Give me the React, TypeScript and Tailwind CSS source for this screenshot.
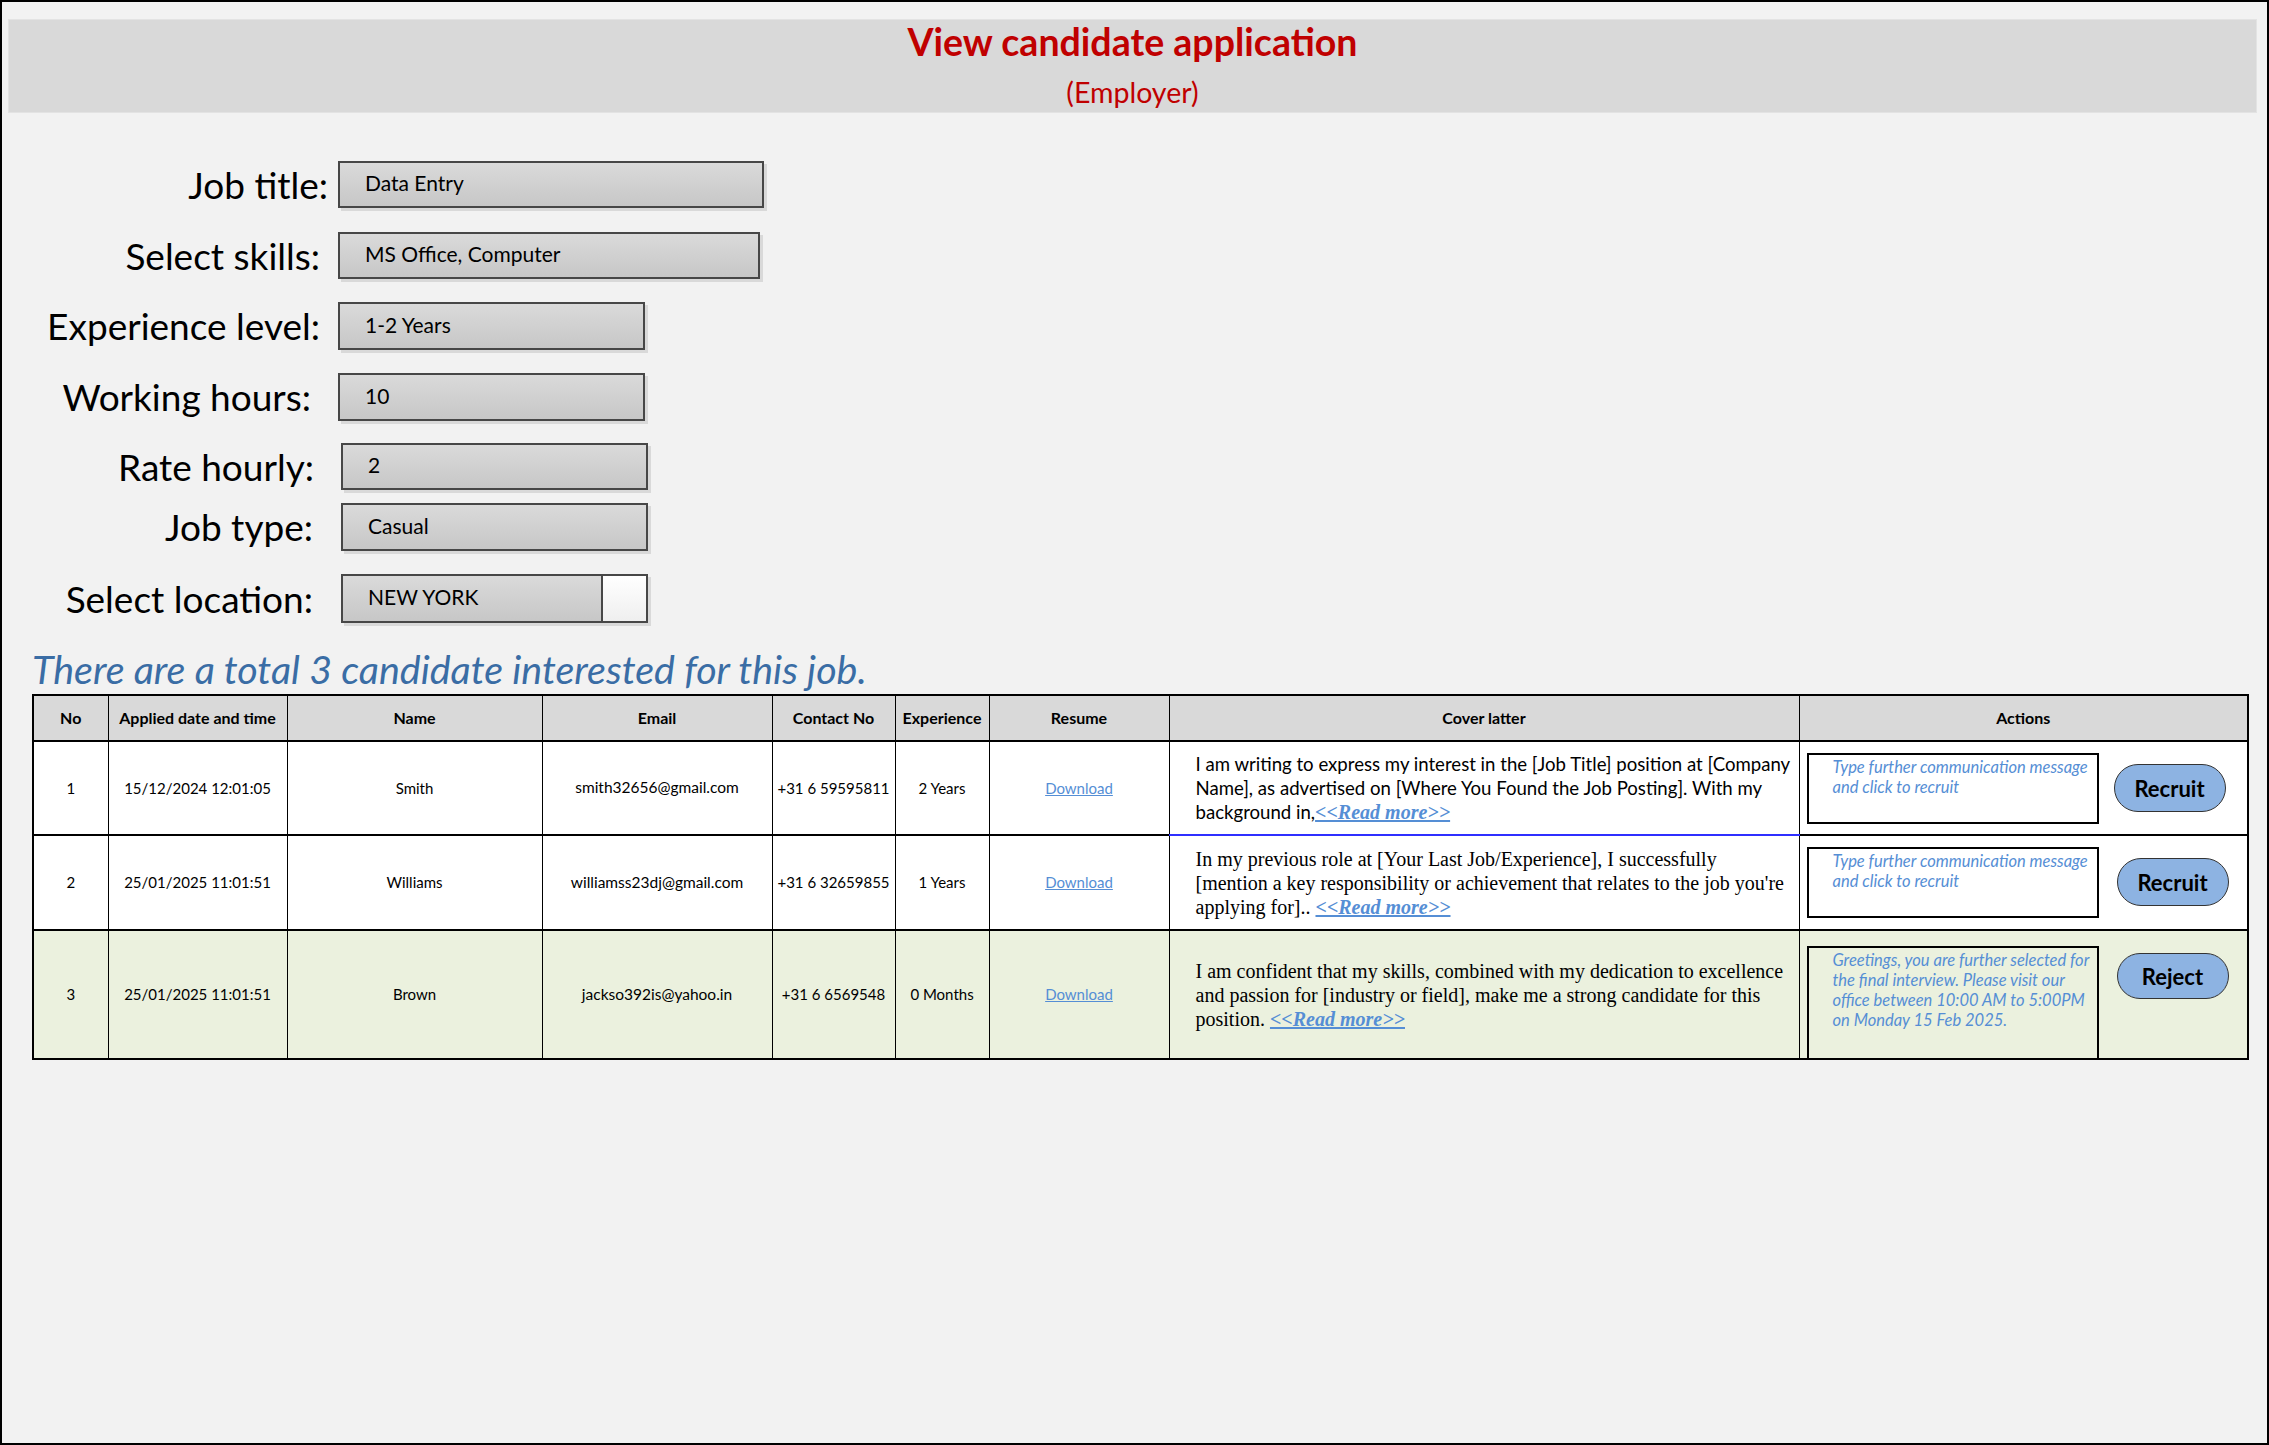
import React from 'react';

type Field = {
  label: string;
  value: string;
  labelW: string;
  gap: string;
  boxW: string;
  boxH: string;
  mt: string;
  select?: boolean;
};

const fields: Field[] = [
  { label: 'Job title:', value: 'Data Entry', labelW: 'w-[326px]', gap: 'ml-[10px]', boxW: 'w-[426px]', boxH: 'h-[47px]', mt: 'mt-[48px]' },
  { label: 'Select skills:', value: 'MS Office, Computer', labelW: 'w-[318px]', gap: 'ml-[18px]', boxW: 'w-[422px]', boxH: 'h-[47px]', mt: 'mt-[24px]' },
  { label: 'Experience level:', value: '1-2 Years', labelW: 'w-[318px]', gap: 'ml-[18px]', boxW: 'w-[307px]', boxH: 'h-[48px]', mt: 'mt-[23px]' },
  { label: 'Working hours:', value: '10', labelW: 'w-[309px]', gap: 'ml-[27px]', boxW: 'w-[307px]', boxH: 'h-[48px]', mt: 'mt-[23px]' },
  { label: 'Rate hourly:', value: '2', labelW: 'w-[312px]', gap: 'ml-[27px]', boxW: 'w-[307px]', boxH: 'h-[47px]', mt: 'mt-[22px]' },
  { label: 'Job type:', value: 'Casual', labelW: 'w-[311px]', gap: 'ml-[28px]', boxW: 'w-[307px]', boxH: 'h-[48px]', mt: 'mt-[13px]' },
  { label: 'Select location:', value: 'NEW YORK', labelW: 'w-[311px]', gap: 'ml-[28px]', boxW: 'w-[307px]', boxH: 'h-[49px]', mt: 'mt-[23px]', select: true },
];

type Row = {
  no: string;
  date: string;
  name: string;
  email: string;
  phone: string;
  exp: string;
  letter: string[];
  serif: boolean;
  message: string[];
  action: string;
};

const rows: Row[] = [
  {
    no: '1',
    date: '15/12/2024 12:01:05',
    name: 'Smith',
    email: 'smith32656@gmail.com',
    phone: '+31 6 59595811',
    exp: '2 Years',
    letter: [
      'I am writing to express my interest in the [Job Title] position at [Company',
      'Name], as advertised on [Where You Found the Job Posting]. With my',
      'background in,',
    ],
    serif: false,
    message: ['Type further communication message', 'and click to recruit'],
    action: 'Recruit',
  },
  {
    no: '2',
    date: '25/01/2025 11:01:51',
    name: 'Williams',
    email: 'williamss23dj@gmail.com',
    phone: '+31 6 32659855',
    exp: '1 Years',
    letter: [
      'In my previous role at [Your Last Job/Experience], I successfully',
      "[mention a key responsibility or achievement that relates to the job you're",
      'applying for].. ',
    ],
    serif: true,
    message: ['Type further communication message', 'and click to recruit'],
    action: 'Recruit',
  },
  {
    no: '3',
    date: '25/01/2025 11:01:51',
    name: 'Brown',
    email: 'jackso392is@yahoo.in',
    phone: '+31 6 6569548',
    exp: '0 Months',
    letter: [
      'I am confident that my skills, combined with my dedication to excellence',
      'and passion for [industry or field], make me a strong candidate for this',
      'position. ',
    ],
    serif: true,
    message: [
      'Greetings, you are further selected for',
      'the final interview. Please visit our',
      'office between 10:00 AM to 5:00PM',
      'on Monday 15 Feb 2025.',
    ],
    action: 'Reject',
  },
];

const headers = ['No', 'Applied date and time', 'Name', 'Email', 'Contact No', 'Experience', 'Resume', 'Cover latter', 'Actions'];
const widths = ['w-[75px]', 'w-[179px]', 'w-[255px]', 'w-[230px]', 'w-[123px]', 'w-[94px]', 'w-[180px]', 'w-[630px]', 'w-[449px]'];
const rowH = ['h-[94px]', 'h-[95px]', 'h-[127px]'];

function FormRow({ f }: { f: Field }) {
  return (
    <div className={`flex items-center ${f.mt}`}>
      <div className={`${f.labelW} text-right text-[37px] leading-[36px] text-black`}>{f.label}</div>
      <div
        className={`${f.gap} ${f.boxW} ${f.boxH} flex border-2 border-[#474747] bg-gradient-to-b from-[#dadada] to-[#c7c7c7] shadow-[3px_3px_0_#d9d9d9]`}
      >
        <div className="flex-1 flex items-center pl-[25px] pb-[3px] text-[21px] text-black">{f.value}</div>
        {f.select && <div className="w-[45px] border-l-2 border-[#474747] bg-gradient-to-b from-white to-[#efefef]" />}
      </div>
    </div>
  );
}

function ReadMore() {
  return (
    <span className="font-['Liberation_Serif',serif] font-bold italic underline text-[#558ed5] text-[20px]">
      {'<<Read more>>'}
    </span>
  );
}

export default function App() {
  return (
    <div className="w-[2269px] h-[1445px] bg-[#f2f2f2] border-2 border-black font-['Lato',sans-serif] overflow-hidden">
      <div className="mt-[17px] ml-[6px] mr-[10px] h-[94px] bg-[#d9d9d9] border border-[#e3e3e3] pt-[4px] text-center text-[#c00000]">
        <div className="text-[37.5px] leading-[36px] font-bold">View candidate application</div>
        <div className="mt-[19px] text-[28.5px] leading-[27px]">(Employer)</div>
      </div>

      {fields.map((f) => (
        <FormRow key={f.label} f={f} />
      ))}

      <div className="mt-[25px] ml-[30px] text-[39.4px] leading-[42px] italic text-[#3a6da5]">
        There are a total 3 candidate interested for this job.
      </div>

      <table className="mt-[4px] ml-[30px] w-[2215px] table-fixed border-collapse border-2 border-black text-[15px] text-black">
        <colgroup>
          {widths.map((w, i) => (
            <col key={i} className={w} />
          ))}
        </colgroup>
        <thead>
          <tr className="h-[46px] bg-[#d9d9d9] border-b-2 border-black">
            {headers.map((h) => (
              <th key={h} className="border-x border-black font-bold text-center text-[16px]">
                {h}
              </th>
            ))}
          </tr>
        </thead>
        <tbody>
          {rows.map((r, i) => (
            <tr key={r.no} className={`${rowH[i]} border-b-2 border-black ${i === 2 ? 'bg-[#ebf1de]' : 'bg-white'}`}>
              <td className="border-x border-black text-center">{r.no}</td>
              <td className="border-x border-black text-center">{r.date}</td>
              <td className="border-x border-black text-center">{r.name}</td>
              <td className="border-x border-black text-center text-[15.5px]">{r.email}</td>
              <td className="border-x border-black text-center">{r.phone}</td>
              <td className="border-x border-black text-center">{r.exp}</td>
              <td className="border-x border-black text-center">
                <span className="underline text-[#558ed5]">Download</span>
              </td>
              <td
                className={`border-x border-black pl-[26px] ${i === 0 ? 'border-b-2 border-b-[#2f2fff]' : ''} ${
                  r.serif ? "font-['Liberation_Serif',serif] text-[20px]" : 'text-[18.6px]'
                } leading-[24px]`}
              >
                {r.letter.map((line, k) => (
                  <div key={k} className="whitespace-nowrap">
                    {line}
                    {k === r.letter.length - 1 && <ReadMore />}
                  </div>
                ))}
              </td>
              <td className="border-x border-black align-top p-0">
                <div className={`flex items-start pl-[7px] ${i === 2 ? 'pt-[15px]' : 'pt-[11px]'}`}>
                  <div
                    className={`w-[292px] border-2 border-black pl-[24px] pt-[2px] text-[16.5px] leading-[20px] italic text-[#558ed5] ${
                      i === 2 ? 'h-[112px] border-b-0' : 'h-[71px]'
                    }`}
                  >
                    {r.message.map((m, k) => (
                      <div key={k} className="whitespace-nowrap">
                        {m}
                      </div>
                    ))}
                  </div>
                  <button
                    className={`${i === 0 ? 'ml-[15px]' : 'ml-[18px]'} ${i === 2 ? 'mt-[7px] h-[46px]' : 'mt-[11px] h-[48px]'} w-[112px] rounded-full border-[1.5px] border-[#333] bg-[#8db3e2] text-[22px] font-bold text-black`}
                  >
                    {r.action}
                  </button>
                </div>
              </td>
            </tr>
          ))}
        </tbody>
      </table>
    </div>
  );
}
